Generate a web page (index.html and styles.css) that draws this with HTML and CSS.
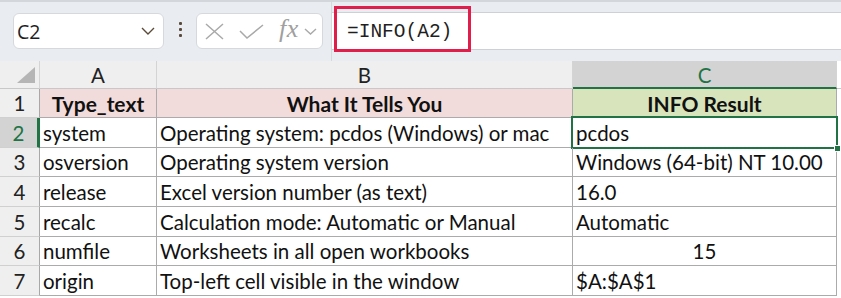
FILE: index.html
```html
<!DOCTYPE html>
<html>
<head>
<meta charset="utf-8">
<link rel="stylesheet" href="styles.css">
</head>
<body>
<div class="toolbar">
  <div class="namebox">
    <span class="name">C2</span>
    <svg class="chev" width="14" height="8" viewBox="0 0 14 8"><path d="M1 1 L7 7 L13 1" fill="none" stroke="#5a4a3a" stroke-width="1.4"/></svg>
  </div>
  <div class="dots"><i></i><i></i><i></i></div>
  <div class="fxbox">
    <svg class="ic-x" width="19" height="17" viewBox="0 0 19 17"><path d="M1 1 L18 16 M18 1 L1 16" fill="none" stroke="#a9a9a9" stroke-width="1.5"/></svg>
    <svg class="ic-ok" width="25" height="15" viewBox="0 0 25 15"><path d="M1 7 L8 14 L24 1" fill="none" stroke="#a9a9a9" stroke-width="1.5"/></svg>
    <span class="fx">fx</span>
    <svg class="ic-dd" width="13" height="7" viewBox="0 0 13 7"><path d="M1 1 L6.5 6 L12 1" fill="none" stroke="#a9a9a9" stroke-width="1.4"/></svg>
  </div>
  <div class="formula">
    <div class="input"><span class="ftext">=INFO(A2)</span></div>
    <div class="mark"></div>
  </div>
</div>
<div class="sheet">
  <div class="h corner"><span class="tri"></span></div>
  <div class="h col">A</div>
  <div class="h col">B</div>
  <div class="h col selcol">C</div>
  <div class="h rest"></div>

  <div class="h rn">1</div>
  <div class="c hd pink">Type_text</div>
  <div class="c hd pink">What It Tells You</div>
  <div class="c hd green">INFO Result</div>
  <div class="rest"></div>

  <div class="h rn selrow">2</div>
  <div class="c">system</div>
  <div class="c">Operating system: pcdos (Windows) or mac</div>
  <div class="c sel">pcdos<span class="handle"></span></div>
  <div class="rest"></div>

  <div class="h rn">3</div>
  <div class="c">osversion</div>
  <div class="c">Operating system version</div>
  <div class="c">Windows (64-bit) NT 10.00</div>
  <div class="rest"></div>

  <div class="h rn">4</div>
  <div class="c">release</div>
  <div class="c">Excel version number (as text)</div>
  <div class="c">16.0</div>
  <div class="rest"></div>

  <div class="h rn">5</div>
  <div class="c">recalc</div>
  <div class="c">Calculation mode: Automatic or Manual</div>
  <div class="c">Automatic</div>
  <div class="rest"></div>

  <div class="h rn">6</div>
  <div class="c">numfile</div>
  <div class="c">Worksheets in all open workbooks</div>
  <div class="c ctr">15</div>
  <div class="rest"></div>

  <div class="h rn">7</div>
  <div class="c">origin</div>
  <div class="c">Top-left cell visible in the window</div>
  <div class="c">$A:$A$1</div>
  <div class="rest"></div>
</div>
</body>
</html>
```
FILE: styles.css
```css
* { box-sizing: border-box; }
html, body { margin: 0; padding: 0; }
body {
  width: 841px;
  height: 298px;
  overflow: hidden;
  background: #ffffff;
  font-family: "Lato", "Liberation Sans", sans-serif;
}
.toolbar {
  height: 61px;
  background: #e9edf1;
  border-top: 2px solid #d3d7db;
  display: flex;
  align-items: flex-start;
  padding-left: 13px;
}
.namebox {
  margin-top: 11px;
  width: 151px;
  height: 36px;
  background: #fff;
  border: 1px solid #d6d9dc;
  border-radius: 6px;
  display: flex;
  align-items: center;
  justify-content: space-between;
  padding: 0 8px 0 3px;
}
.name {
  font-family: "Open Sans", "Noto Sans", sans-serif;
  font-size: 19.5px;
  color: #1f1f1f;
}
.dots {
  width: 32px;
  height: 59px;
  display: flex;
  flex-direction: column;
  align-items: center;
  justify-content: center;
  gap: 3px;
  padding-bottom: 4px;
}
.dots i {
  display: block;
  width: 3px;
  height: 3px;
  background: #5a4a3a;
  border-radius: 1px;
}
.fxbox {
  margin-top: 11px;
  width: 127px;
  height: 36px;
  background: #fff;
  border: 1px solid #d6d9dc;
  border-radius: 6px;
  display: flex;
  align-items: center;
  padding-left: 8px;
}
.ic-x { margin-right: 15px; }
.ic-ok { margin-right: 15px; margin-top: 1px; }
.fx {
  font-family: "Liberation Serif", serif;
  font-style: italic;
  font-size: 26px;
  color: #a0a0a0;
  letter-spacing: 0.5px;
  margin-right: 5px;
  position: relative;
  top: -2px;
}
.formula {
  margin-left: 8px;
  flex: 1;
  height: 59px;
  border-left: 1px solid #d6d9dc;
  position: relative;
}
.input {
  margin-top: 10px;
  height: 38px;
  background: #fff;
  border-top: 1px solid #cdd1d5;
  border-bottom: 1px solid #cdd1d5;
  display: flex;
  align-items: center;
  padding-left: 15px;
}
.ftext {
  font-family: "Liberation Mono", monospace;
  font-size: 19.5px;
  color: #1f1f1f;
  position: relative;
  top: 1px;
}
.mark {
  position: absolute;
  left: 2px;
  top: 4px;
  width: 137px;
  height: 46px;
  border: 3px solid #e01e4b;
}
.sheet {
  display: grid;
  grid-template-columns: 40px 117px 416px 264px 1fr;
  grid-template-rows: 28px 29px 30px 29px 30px 30px 29px 30px 1fr;
  height: 237px;
  background: #fff;
}
.h {
  background: #efefef;
  border-right: 1px solid #d4d4d4;
  border-bottom: 1px solid #c8c8c8;
  font-size: 20.5px;
  color: #222;
  display: flex;
  align-items: center;
  justify-content: center;
}
.h.rest { border-right: none; }
.corner { position: relative; }
.tri {
  position: absolute;
  right: 4px;
  bottom: 5px;
  width: 0;
  height: 0;
  border-left: 18px solid transparent;
  border-bottom: 16px solid #b5b5b5;
}
.col { padding-top: 1px; }
.selcol {
  background: #d3d3d3;
  color: #217346;
  border-bottom: 2px solid #217346;
}
.rn {
  background: #efefef;
  border-right: 1px solid #a8a8a8;
  border-bottom: 1px solid #d0d0d0;
}
.selrow {
  background: #d3d3d3;
  color: #217346;
  border-right: 3px solid #217346;
}
.c {
  border-right: 1px solid #ababab;
  border-bottom: 1px solid #ababab;
  font-size: 20.5px;
  color: #111;
  display: flex;
  align-items: center;
  padding-left: 3px;
  white-space: nowrap;
  position: relative;
}
.hd {
  font-weight: 700;
  font-size: 21px;
  justify-content: center;
  padding-left: 0;
}
.pink { background: #f2dcdb; }
.green { background: #d8e4bc; }
.ctr { justify-content: center; padding-left: 0; }
.sel::after {
  content: "";
  position: absolute;
  left: -2px;
  top: -2px;
  right: -2px;
  bottom: -2px;
  border: 2px solid #217346;
}
.handle {
  position: absolute;
  right: -5px;
  bottom: -5px;
  width: 7px;
  height: 7px;
  background: #217346;
  border: 1px solid #fff;
  z-index: 2;
}
.rest { background: #fff; }
```
